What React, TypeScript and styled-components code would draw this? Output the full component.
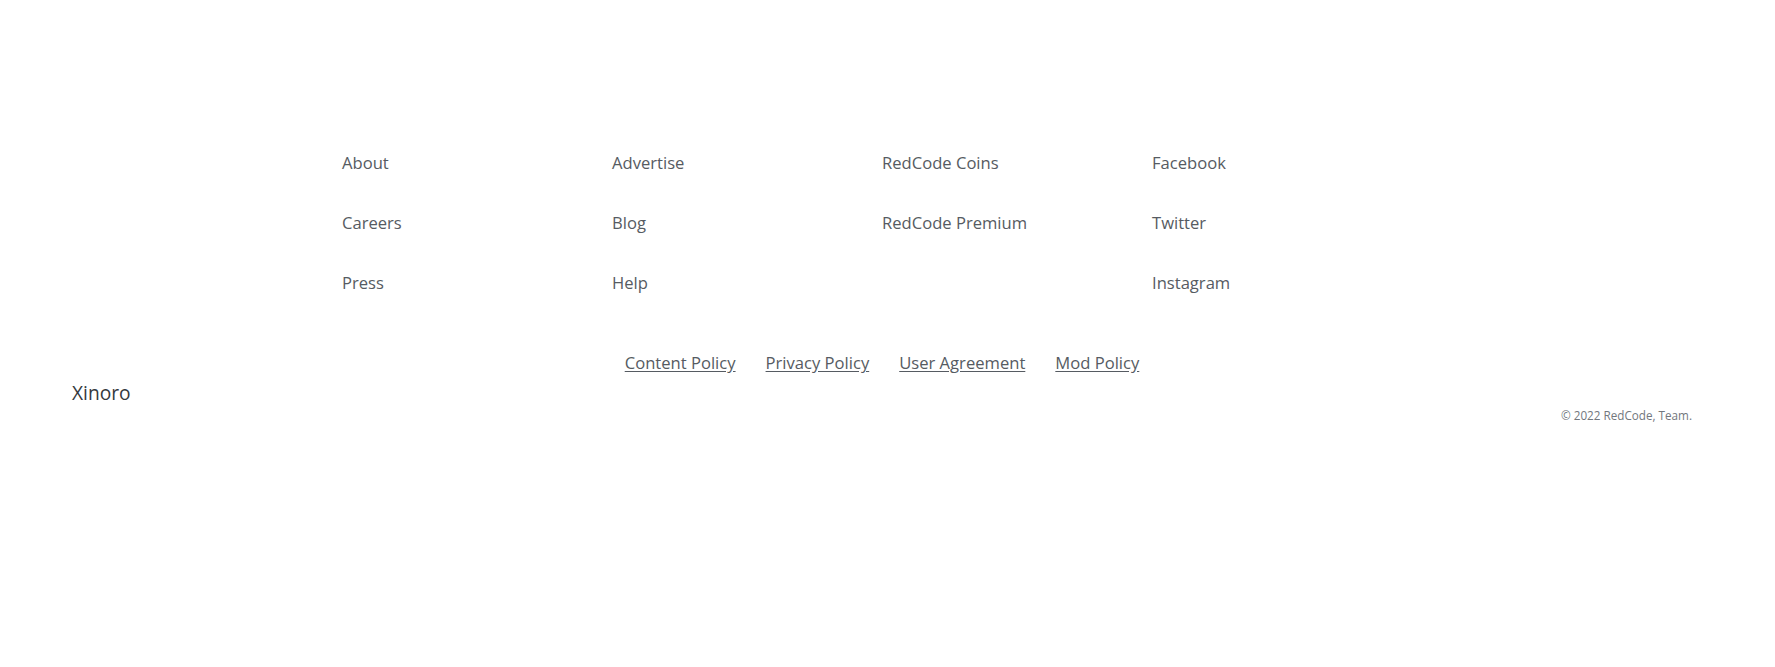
import React from 'react';
import styled, { createGlobalStyle } from 'styled-components';

const GlobalStyle = createGlobalStyle`
  html, body {
    margin: 0;
    padding: 0;
    background: #ffffff;
  }
  body {
    font-family: "Open Sans", "Noto Sans", sans-serif;
  }
`;

const palette = {
  link: '#565b62',
  brand: '#35393e',
  muted: '#72777d',
};

const Page = styled.div`
  width: calc(100% - 11px);
  min-height: 667px;
  box-sizing: border-box;
  padding: 151px 72px 0 72px;
  display: flex;
  flex-direction: column;
`;

const LinkGrid = styled.div`
  display: grid;
  grid-template-columns: repeat(4, 270px);
  justify-content: center;
`;

const LinkColumn = styled.div`
  display: flex;
  flex-direction: column;
  gap: 36px;
`;

const FooterLink = styled.a`
  font-size: 16.6px;
  line-height: 24px;
  color: ${palette.link};
  text-decoration: none;
  cursor: pointer;
`;

const PolicyRow = styled.div`
  display: flex;
  justify-content: center;
  gap: 30px;
  margin-top: 56px;
`;

const PolicyLink = styled.a`
  font-size: 16.6px;
  line-height: 24px;
  color: ${palette.link};
  text-decoration: underline;
  text-underline-offset: 2px;
  cursor: pointer;
`;

const Brand = styled.div`
  margin-top: 4px;
  font-size: 19.2px;
  line-height: 28px;
  color: ${palette.brand};
`;

const Copyright = styled.div`
  align-self: flex-end;
  margin-top: -1px;
  font-size: 11.7px;
  line-height: 18px;
  color: ${palette.muted};
`;

const columns: string[][] = [
  ['About', 'Careers', 'Press'],
  ['Advertise', 'Blog', 'Help'],
  ['RedCode Coins', 'RedCode Premium'],
  ['Facebook', 'Twitter', 'Instagram'],
];

const policies = ['Content Policy', 'Privacy Policy', 'User Agreement', 'Mod Policy'];

export default function App() {
  return (
    <>
      <GlobalStyle />
      <Page>
        <LinkGrid>
          {columns.map((col, i) => (
            <LinkColumn key={i}>
              {col.map((label) => (
                <FooterLink key={label}>{label}</FooterLink>
              ))}
            </LinkColumn>
          ))}
        </LinkGrid>
        <PolicyRow>
          {policies.map((p) => (
            <PolicyLink key={p}>{p}</PolicyLink>
          ))}
        </PolicyRow>
        <Brand>Xinoro</Brand>
        <Copyright>© 2022 RedCode, Team.</Copyright>
      </Page>
    </>
  );
}
